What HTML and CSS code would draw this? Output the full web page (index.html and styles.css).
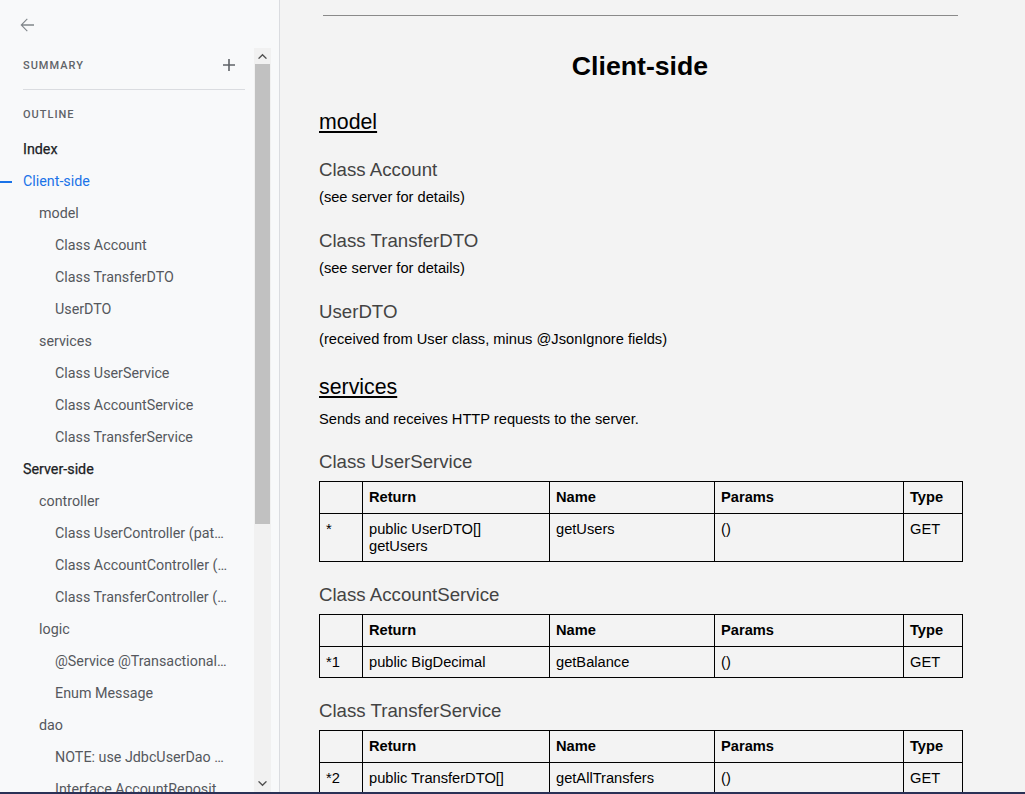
FILE: index.html
```html
<!DOCTYPE html>
<html lang="en">
<head>
<meta charset="utf-8">
<title>Client-side</title>
<link rel="stylesheet" href="styles.css">
</head>
<body>
<div class="app">
  <aside class="sidebar">
    <div class="sidebar-top">
      <svg class="back" width="16" height="16" viewBox="0 0 16 16"><path d="M15 7.2H3.8l4.9-4.9L7.9 1.5 1.5 8l6.4 6.5.8-.8-4.9-4.9H15z" fill="#80868b"/></svg>
    </div>
    <div class="sidebar-body">
      <nav class="nav">
        <div class="summary-row">
          <span class="label">SUMMARY</span>
          <svg class="plus" width="12" height="12" viewBox="0 0 12 12"><path d="M5.2 0h1.6v5.2H12v1.6H6.8V12H5.2V6.8H0V5.2h5.2z" fill="#5f6368"/></svg>
        </div>
        <div class="divider"></div>
        <div class="outline-row"><span class="label">OUTLINE</span></div>
        <ul class="outline">
          <li class="l1">Index</li>
          <li class="l1 active">Client-side</li>
          <li class="l2">model</li>
          <li class="l3">Class Account</li>
          <li class="l3">Class TransferDTO</li>
          <li class="l3">UserDTO</li>
          <li class="l2">services</li>
          <li class="l3">Class UserService</li>
          <li class="l3">Class AccountService</li>
          <li class="l3">Class TransferService</li>
          <li class="l1">Server-side</li>
          <li class="l2">controller</li>
          <li class="l3">Class UserController (pat…</li>
          <li class="l3">Class AccountController (…</li>
          <li class="l3">Class TransferController (…</li>
          <li class="l2">logic</li>
          <li class="l3">@Service @Transactional…</li>
          <li class="l3">Enum Message</li>
          <li class="l2">dao</li>
          <li class="l3">NOTE: use JdbcUserDao …</li>
          <li class="l3">Interface AccountReposit…</li>
        </ul>
      </nav>
      <div class="scrollbar">
        <div class="sb-btn"><svg width="9" height="6" viewBox="0 0 9 6"><path d="M0 5.2 4.5.8 9 5.2 7.9 6 4.5 2.7 1.1 6z" fill="#505050"/></svg></div>
        <div class="sb-thumb"></div>
        <div class="sb-track"></div>
        <div class="sb-btn down"><svg width="9" height="6" viewBox="0 0 9 6"><path d="M0 .8 4.5 5.2 9 .8 7.9 0 4.5 3.3 1.1 0z" fill="#505050"/></svg></div>
      </div>
    </div>
  </aside>
  <main class="main">
    <div class="doc">
      <div class="rule"></div>
      <h1 class="title">Client-side</h1>
      <h2 class="h2 first">model</h2>
      <h3 class="h3 h3-first">Class Account</h3>
      <p class="p">(see server for details)</p>
      <h3 class="h3">Class TransferDTO</h3>
      <p class="p">(see server for details)</p>
      <h3 class="h3">UserDTO</h3>
      <p class="p">(received from User class, minus @JsonIgnore fields)</p>
      <h2 class="h2">services</h2>
      <p class="p intro">Sends and receives HTTP requests to the server.</p>
      <h3 class="h3">Class UserService</h3>
      <table class="tbl">
        <colgroup><col class="c1"><col class="c2"><col class="c3"><col class="c4"><col class="c5"></colgroup>
        <tr><th></th><th>Return</th><th>Name</th><th>Params</th><th>Type</th></tr>
        <tr><td>*</td><td>public UserDTO[]<br>getUsers</td><td>getUsers</td><td>()</td><td>GET</td></tr>
      </table>
      <h3 class="h3 after-table">Class AccountService</h3>
      <table class="tbl">
        <colgroup><col class="c1"><col class="c2"><col class="c3"><col class="c4"><col class="c5"></colgroup>
        <tr><th></th><th>Return</th><th>Name</th><th>Params</th><th>Type</th></tr>
        <tr><td>*1</td><td>public BigDecimal</td><td>getBalance</td><td>()</td><td>GET</td></tr>
      </table>
      <h3 class="h3 after-table">Class TransferService</h3>
      <table class="tbl">
        <colgroup><col class="c1"><col class="c2"><col class="c3"><col class="c4"><col class="c5"></colgroup>
        <tr><th></th><th>Return</th><th>Name</th><th>Params</th><th>Type</th></tr>
        <tr><td>*2</td><td>public TransferDTO[]</td><td>getAllTransfers</td><td>()</td><td>GET</td></tr>
      </table>
    </div>
  </main>
</div>
<div class="bottom-edge"></div>
</body>
</html>
```

FILE: styles.css
```css
html, body {
  margin: 0;
  padding: 0;
  height: 794px;
  overflow: hidden;
}
body {
  font-family: "Liberation Sans", Arial, sans-serif;
  background: #f3f3f3;
}
.app {
  display: flex;
  height: 792px;
}
.bottom-edge {
  height: 2px;
  background: #2a3156;
}

/* Sidebar */
.sidebar {
  width: 279px;
  flex: none;
  background: #f8f9fa;
  border-right: 1px solid #dadce0;
  display: flex;
  flex-direction: column;
  font-family: Roboto, "Noto Sans", sans-serif;
}
.sidebar-top {
  height: 48px;
  flex: none;
  display: flex;
  align-items: center;
  padding-left: 19px;
}
.back { display: block; margin-top: 2px; }
.sidebar-body {
  flex: 1;
  display: flex;
  min-height: 0;
  padding-right: 8px;
}
.nav {
  flex: 1;
  overflow: hidden;
  padding-left: 23px;
  padding-right: 9px;
}
.summary-row {
  height: 34px;
  display: flex;
  align-items: center;
  justify-content: space-between;
  padding-right: 10px;
}
.label {
  font-size: 11px;
  font-weight: 500;
  letter-spacing: 1px;
  color: #5f6368;
}
.plus { display: block; }
.divider {
  height: 1px;
  background: #dadce0;
  margin-top: 7px;
}
.outline-row {
  height: 28px;
  margin-top: 10px;
  display: flex;
  align-items: center;
}
.outline {
  list-style: none;
  margin: 5px 0 0 0;
  padding: 0;
}
.outline li {
  height: 32px;
  line-height: 32px;
  font-size: 14.3px;
  white-space: nowrap;
  overflow: hidden;
  text-overflow: ellipsis;
  position: relative;
}
.l1 {
  color: #202124;
  font-weight: 400;
  -webkit-text-stroke: 0.25px #202124;
}
.l2 {
  padding-left: 16px;
  color: #55585d;
}
.l3 {
  padding-left: 32px;
  color: #55585d;
}
.outline li.active {
  color: #1a73e8;
  -webkit-text-stroke: 0;
  overflow: visible;
}
.outline li.active::before {
  content: "";
  position: absolute;
  left: -23px;
  top: 16px;
  width: 12px;
  height: 2px;
  background: #1a73e8;
}

/* Fake scrollbar */
.scrollbar {
  width: 17px;
  flex: none;
  display: flex;
  flex-direction: column;
  background: #f1f1f1;
}
.sb-btn {
  height: 16px;
  flex: none;
  display: flex;
  align-items: center;
  justify-content: center;
}
.sb-btn.down { height: 17px; }
.sb-thumb {
  height: 460px;
  flex: none;
  background: #c1c1c1;
  margin: 0 1px;
}
.sb-track { flex: 1; }

/* Main document */
.main {
  flex: 1;
  overflow: hidden;
}
.doc {
  width: 642px;
  margin-left: 39px;
  color: #000;
}
.rule {
  height: 1px;
  background: #8a8a8a;
  margin: 15px 3px 0 4px;
}
.title {
  margin: 34px 0 0 0;
  font-size: 26.67px;
  line-height: 32px;
  font-weight: 700;
  text-align: center;
}
.h2 {
  margin: 25px 0 0 0;
  font-size: 21.33px;
  line-height: 28px;
  font-weight: 400;
  text-decoration: underline;
  text-underline-offset: 2px;
}
.h2.first { margin-top: 26px; }
.h3 {
  margin: 23px 0 0 0;
  font-size: 18.67px;
  line-height: 24px;
  font-weight: 400;
  color: #434343;
}
.h3.h3-first { margin-top: 22px; }
.intro + .h3 { margin-top: 22px; }
.h3.after-table { margin-top: 21px; }
.p {
  margin: 6px 0 0 0;
  font-size: 14.67px;
  line-height: 18px;
}
.p.intro { margin-top: 9px; }
.tbl {
  margin-top: 7px;
  width: 643px;
  border-collapse: collapse;
  table-layout: fixed;
  font-size: 14.67px;
}
.c1 { width: 43px; }
.c2 { width: 187px; }
.c3 { width: 165px; }
.c4 { width: 189px; }
.c5 { width: 59px; }
.tbl th, .tbl td {
  border: 1px solid #000;
  padding: 7px 7px 6px 6px;
  line-height: 17px;
  text-align: left;
  vertical-align: top;
}
.tbl th {
  font-weight: 700;
  padding-top: 7px;
  padding-bottom: 7px;
}
```
